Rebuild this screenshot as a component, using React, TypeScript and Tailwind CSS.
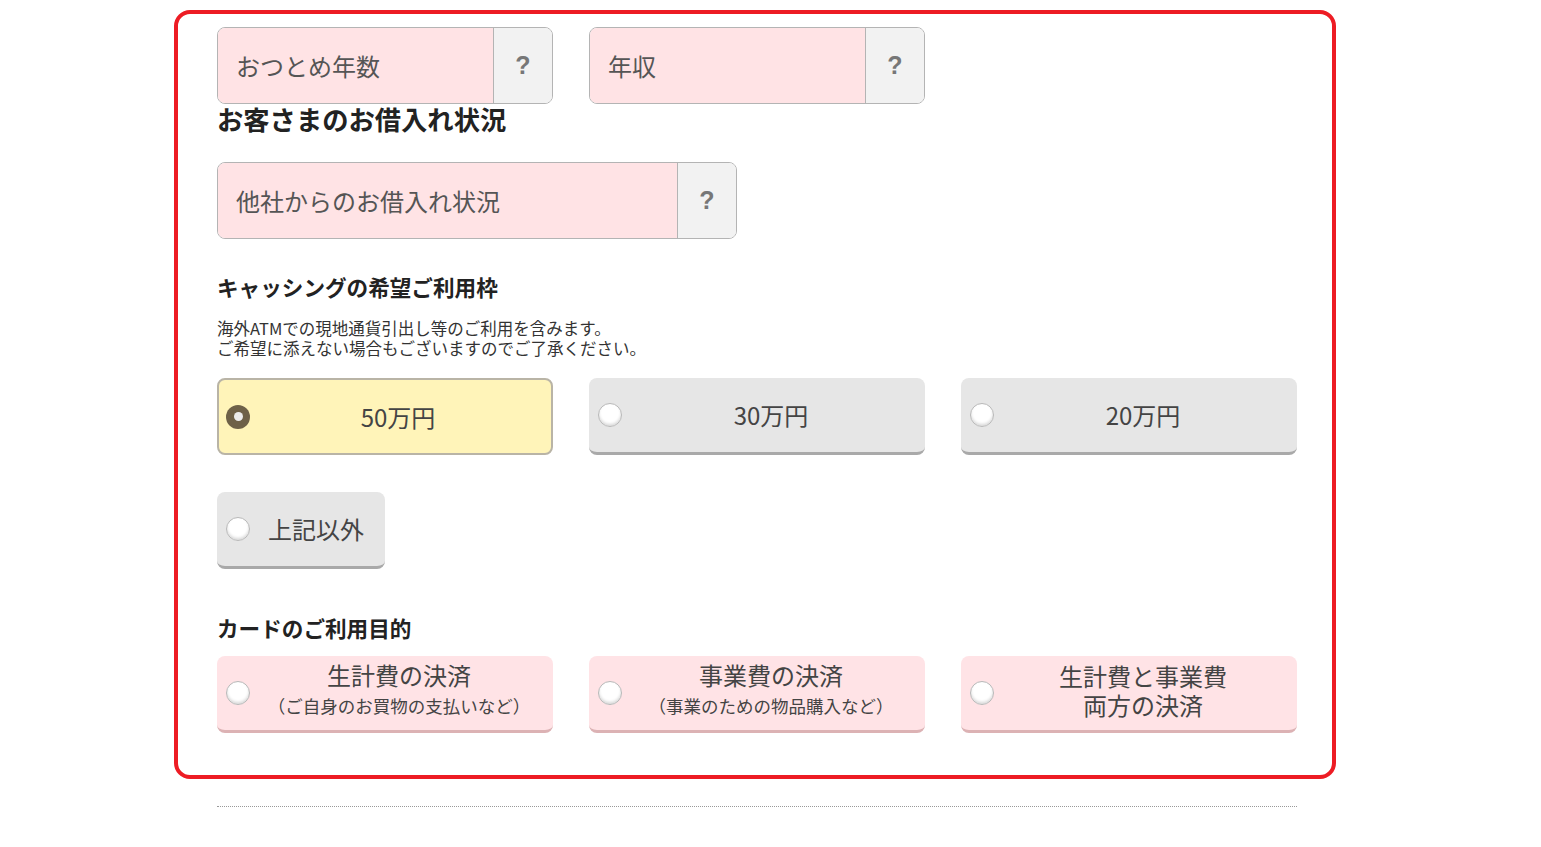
import React from "react";

const font = { fontFamily: '"Noto Sans CJK JP", "Noto Sans", sans-serif' };

function InputField({ label, width }: { label: string; width: string }) {
  return (
    <div className={`flex h-[77px] ${width} rounded-[8px] border border-[#b4b4b4] overflow-hidden`}>
      <div className="flex-1 bg-[#ffe3e5] flex items-center pl-[18px] text-[24px] text-[#555]">{label}</div>
      <div className="w-[59px] bg-[#f2f2f2] border-l border-[#b4b4b4] flex items-center justify-center text-[25px] text-[#777] font-bold" style={{ fontFamily: '"Liberation Sans", sans-serif' }}>
        ?
      </div>
    </div>
  );
}

function Radio({ checked }: { checked?: boolean }) {
  if (checked) {
    return (
      <div className="w-[24px] h-[24px] rounded-full bg-[#6e6148] flex items-center justify-center shrink-0">
        <div className="w-[9px] h-[9px] rounded-full bg-[#ececec]" />
      </div>
    );
  }
  return (
    <div className="w-[24px] h-[24px] rounded-full bg-white border border-[#b8b8b8] shadow-[inset_0_-2px_3px_rgba(0,0,0,0.15)] shrink-0" />
  );
}

function AmountCard({ label, checked }: { label: string; checked?: boolean }) {
  if (checked) {
    return (
      <div className="flex items-center h-[77px] rounded-[8px] border-2 border-[#b9b4a6] bg-[#fff4b9] pl-[7px] pr-[5px]">
        <Radio checked />
        <div className="flex-1 text-center text-[24px] text-[#444]">{label}</div>
      </div>
    );
  }
  return (
    <div className="flex items-center h-[77px] rounded-[8px] bg-[#e6e6e6] border-b-[3px] border-[#a9a9a9] pl-[9px] pr-[5px]">
      <Radio />
      <div className="flex-1 text-center text-[24px] text-[#444]">{label}</div>
    </div>
  );
}

function PurposeCard({ l1, l2, big }: { l1: string; l2: string; big?: boolean }) {
  return (
    <div className="flex items-center h-[77px] rounded-[8px] bg-[#ffe3e6] border-b-[3px] border-[#dcb2b4] pl-[9px] pr-[5px]">
      <Radio />
      <div className={`flex-1 text-center text-[#444] ${big ? "pb-[6px]" : "pb-[4px]"}`}>
        {big ? (
          <>
            <div className="text-[24px] leading-[29px]">{l1}</div>
            <div className="text-[24px] leading-[29px]">{l2}</div>
          </>
        ) : (
          <>
            <div className="text-[24px] leading-[30px]">{l1}</div>
            <div className="text-[17.5px] leading-[32px]">{l2}</div>
          </>
        )}
      </div>
    </div>
  );
}

export default function App() {
  return (
    <div className="bg-white min-h-[847px] w-full" style={font}>
      <div className="ml-[174px] w-[1162px] pt-[10px]">
        <div className="border-4 border-[#ed1c24] rounded-[16px] pl-[39px] pr-[35px] pt-[13px] pb-[42px]">
          <div className="grid grid-cols-3 gap-x-[36px]">
            <InputField label="おつとめ年数" width="w-full" />
            <InputField label="年収" width="w-full" />
          </div>
          <h2 className="text-[26.3px] leading-[30px] font-bold text-[#222]">お客さまのお借入れ状況</h2>
          <div className="mt-[28px]">
            <InputField label="他社からのお借入れ状況" width="w-[520px]" />
          </div>
          <h3 className="mt-[34px] text-[21.6px] leading-[28px] font-bold text-[#222]">キャッシングの希望ご利用枠</h3>
          <p className="mt-[17px] text-[16.5px] leading-[20px] text-[#333]">
            海外ATMでの現地通貨引出し等のご利用を含みます。
            <br />
            ご希望に添えない場合もございますのでご了承ください。
          </p>
          <div className="mt-[20px] grid grid-cols-3 gap-x-[36px]">
            <AmountCard label="50万円" checked />
            <AmountCard label="30万円" />
            <AmountCard label="20万円" />
          </div>
          <div className="mt-[37px] w-[168px] flex items-center h-[77px] rounded-[8px] bg-[#e6e6e6] border-b-[3px] border-[#a9a9a9] pl-[9px]">
            <Radio />
            <div className="ml-[18px] text-[24px] text-[#444]">上記以外</div>
          </div>
          <h3 className="mt-[45px] text-[21.6px] leading-[28px] font-bold text-[#222]">カードのご利用目的</h3>
          <div className="mt-[14px] grid grid-cols-3 gap-x-[36px]">
            <PurposeCard l1="生計費の決済" l2="（ご自身のお買物の支払いなど）" />
            <PurposeCard l1="事業費の決済" l2="（事業のための物品購入など）" />
            <PurposeCard l1="生計費と事業費" l2="両方の決済" big />
          </div>
        </div>
        <div className="ml-[43px] w-[1080px] mt-[27px] border-t border-dotted border-[#999]" />
      </div>
    </div>
  );
}
